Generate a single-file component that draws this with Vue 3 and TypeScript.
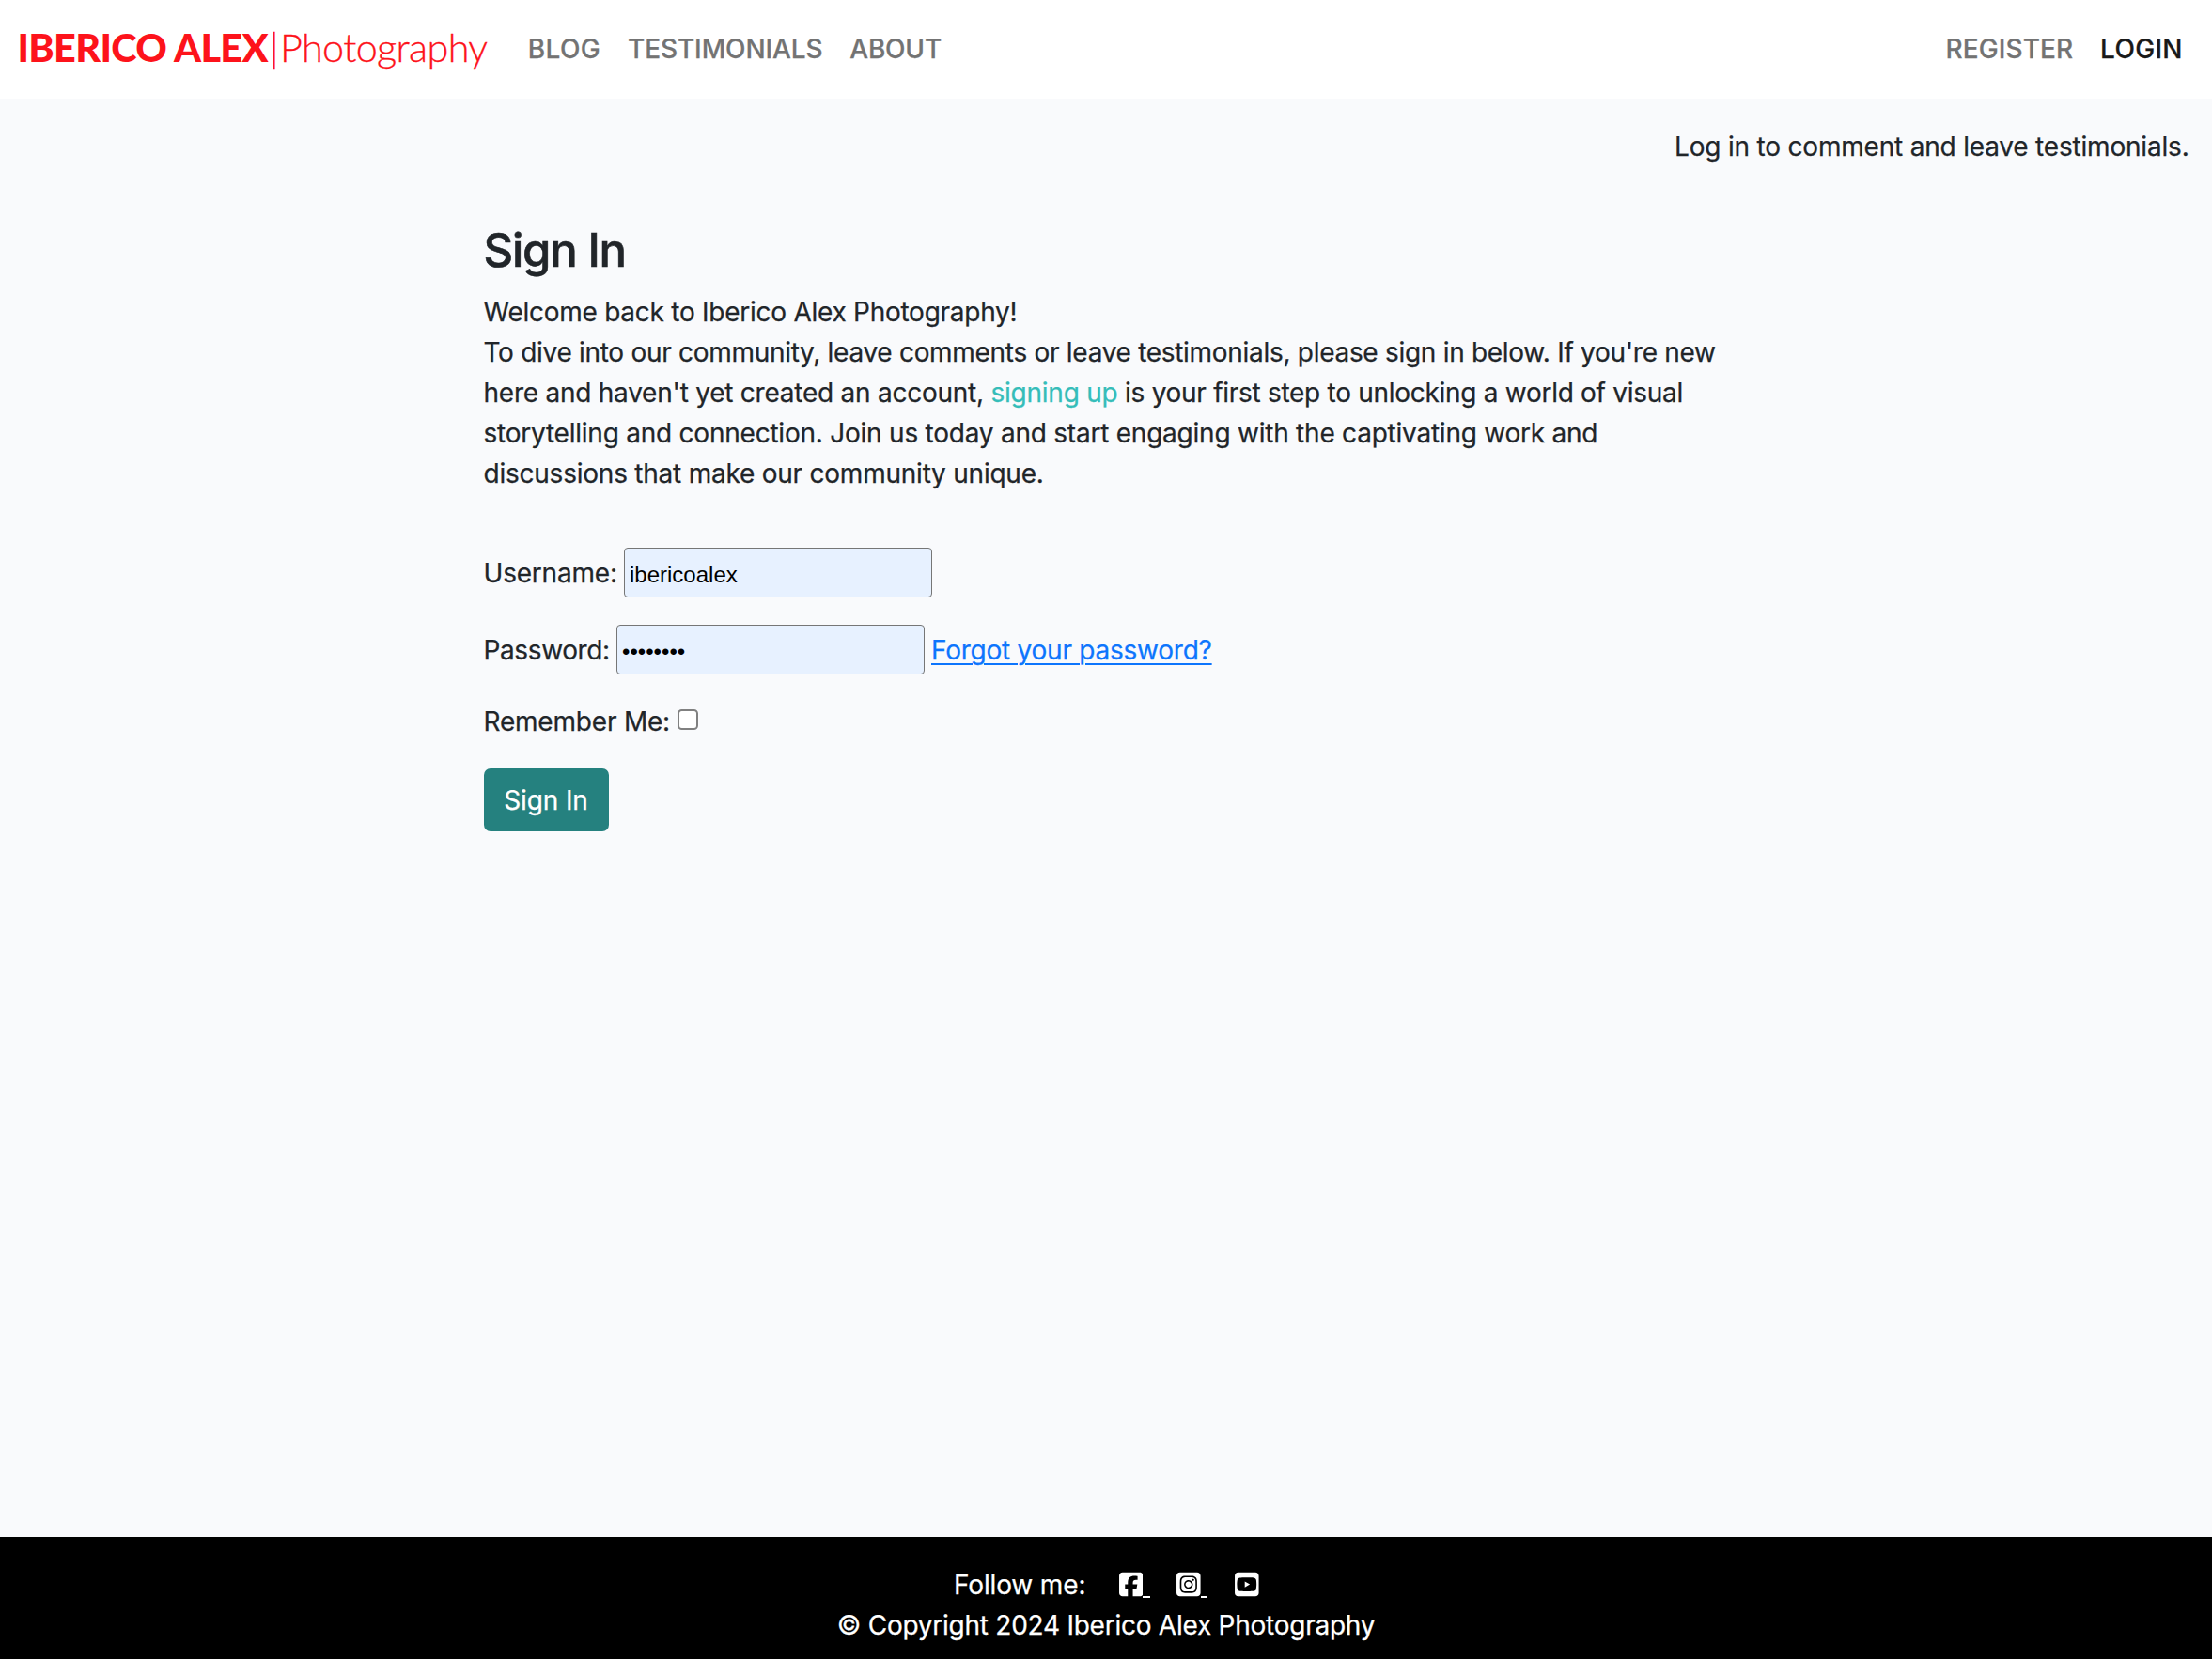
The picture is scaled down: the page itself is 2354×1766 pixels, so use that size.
<script setup lang="ts">
import { ref } from 'vue'

interface NavLink {
  label: string
  key: string
  active?: boolean
}

const mainLinks: NavLink[] = [
  { label: 'BLOG', key: 'blog' },
  { label: 'TESTIMONIALS', key: 'testimonials' },
  { label: 'ABOUT', key: 'about' },
]

const accountLinks: NavLink[] = [
  { label: 'REGISTER', key: 'register' },
  { label: 'LOGIN', key: 'login', active: true },
]

const username = ref('ibericoalex')
const password = ref('abcdefgh')
const remember = ref(false)
</script>

<template>
  <div class="page">
    <header class="navbar">
      <a class="brand"><b>IBERICO ALEX</b><span class="bar">|</span><span>Photography</span></a>
      <nav class="links">
        <a v-for="link in mainLinks" :key="link.key" class="link" :class="link.key">{{ link.label }}</a>
      </nav>
      <nav class="links account">
        <a
          v-for="link in accountLinks"
          :key="link.key"
          class="link"
          :class="[link.key, { active: link.active }]"
        >{{ link.label }}</a>
      </nav>
    </header>

    <p class="notice">Log in to comment and leave testimonials.</p>

    <main class="content">
      <h1 class="title">Sign In</h1>
      <p class="intro">
        <span class="row welcome">Welcome back to Iberico Alex Photography!</span>
        <span class="row dive">To dive into our community, leave comments or leave testimonials, please sign in below. If you're new</span>
        <span class="row here">here and haven't yet created an account, <a class="signup">signing up</a> <span class="step">is your first step to unlocking a world of visual</span></span>
        <span class="row story">storytelling and connection. Join us today and start engaging with the captivating work and</span>
        <span class="row story">discussions that make our community unique.</span>
      </p>

      <form class="form" @submit.prevent>
        <div class="field">
          <label class="label username" for="username">Username:</label>
          <input id="username" v-model="username" class="input" type="text" />
        </div>
        <div class="field">
          <label class="label password" for="password">Password:</label>
          <input id="password" v-model="password" class="input" type="password" />
          <a class="forgot">Forgot your password?</a>
        </div>
        <div class="remember">
          <label class="label" for="remember">Remember Me:</label>
          <input id="remember" v-model="remember" class="check" type="checkbox" />
        </div>
        <button class="submit" type="submit">Sign In</button>
      </form>
    </main>

    <footer class="footer">
      <div class="follow">
        <span class="follow-text">Follow me:</span>
        <a class="social underlined" aria-label="Facebook">
          <svg viewBox="0 0 448 512"><path fill="#fff" d="M64 32C28.700 32 0 60.700 0 96V416c0 35.300 28.700 64 64 64h98.200V334.200H109.400V256h52.800V222.300c0-87.100 39.400-127.500 125-127.500c16.200 0 44.200 3.200 55.700 6.400V172c-6-.6-16.500-1-29.600-1c-42 0-58.200 15.900-58.200 57.200V256h83.600l-14.400 78.200H255V480H384c35.300 0 64-28.700 64-64V96c0-35.300-28.700-64-64-64H64z" /></svg>
        </a>
        <a class="social underlined" aria-label="Instagram">
          <svg viewBox="0 0 448 512"><path fill="#fff" d="M194.400 211.700a53.300 53.300 0 1 0 59.300 88.700 53.300 53.300 0 1 0 -59.300-88.700zm142.300-68.400c-5.200-5.200-11.500-9.300-18.400-12c-18.100-7.100-57.600-6.800-83.100-6.500c-4.100 0-7.900 .1-11.200 .1c-3.300 0-7.200 0-11.400-.1c-25.500-.3-64.800-.7-82.900 6.500c-6.900 2.700-13.100 6.800-18.400 12s-9.300 11.500-12 18.400c-7.100 18.100-6.700 57.700-6.500 83.200c0 4.100 .1 7.900 .1 11.100s0 7-.1 11.100c-.2 25.500-.6 65.100 6.500 83.200c2.700 6.900 6.800 13.100 12 18.400s11.500 9.300 18.400 12c18.100 7.100 57.600 6.800 83.100 6.500c4.100 0 7.900-.1 11.200-.1c3.300 0 7.200 0 11.400 .1c25.500 .3 64.800 .7 82.900-6.500c6.900-2.700 13.100-6.800 18.400-12s9.300-11.500 12-18.400c7.200-18 6.800-57.400 6.500-83c0-4.200-.1-8.100-.1-11.400s0-7.100 .1-11.400c.3-25.500 .7-64.900-6.500-83c-2.700-6.900-6.800-13.100-12-18.400zm-67.100 44.500A82 82 0 1 1 178.400 324.200a82 82 0 1 1 91.100-136.400zm29.200-1.300c-3.100-2.100-5.600-5.100-7.100-8.600s-1.800-7.300-1.100-11.100s2.600-7.100 5.200-9.800s6.100-4.500 9.800-5.200s7.600-.4 11.100 1.100s6.500 3.900 8.600 7s3.200 6.800 3.200 10.600c0 2.500-.5 5-1.400 7.300s-2.400 4.400-4.100 6.200s-3.900 3.200-6.200 4.200s-4.800 1.500-7.300 1.500c-3.800 0-7.500-1.100-10.600-3.200zM448 96c0-35.300-28.700-64-64-64H64C28.700 32 0 60.700 0 96V416c0 35.300 28.700 64 64 64H384c35.300 0 64-28.700 64-64V96zM357 389c-18.700 18.700-41.400 24.600-67 25.900c-26.400 1.500-105.600 1.500-132 0c-25.600-1.300-48.300-7.200-67-25.900s-24.600-41.400-25.800-67c-1.500-26.400-1.500-105.600 0-132c1.300-25.600 7.100-48.300 25.800-67s41.500-24.600 67-25.800c26.400-1.500 105.600-1.500 132 0c25.600 1.300 48.300 7.100 67 25.800s24.600 41.400 25.800 67c1.500 26.300 1.500 105.400 0 131.900c-1.300 25.600-7.100 48.300-25.800 67z" /></svg>
        </a>
        <a class="social" aria-label="YouTube">
          <svg viewBox="0 0 448 512"><path fill="#fff" d="M282 256.200l-95.200-54.100V310.300L282 256.200zM384 32H64C28.700 32 0 60.700 0 96V416c0 35.300 28.700 64 64 64H384c35.300 0 64-28.700 64-64V96c0-35.300-28.700-64-64-64zm14.400 136.100c7.600 28.600 7.600 88.200 7.600 88.200s0 59.600-7.600 88.100c-4.200 15.800-16.500 27.700-32.200 31.900C337.900 384 224 384 224 384s-113.900 0-142.200-7.600c-15.700-4.200-28-16.100-32.200-31.900C42 315.900 42 256.300 42 256.300s0-59.700 7.600-88.200c4.200-15.800 16.500-28.200 32.200-32.400C110.100 128 224 128 224 128s113.900 0 142.200 7.700c15.700 4.200 28 16.600 32.200 32.400z" /></svg>
        </a>
      </div>
      <p class="copyright">© Copyright 2024 Iberico Alex Photography</p>
    </footer>
  </div>
</template>

<style>
body {
  margin: 0;
  background: #f9fafc;
}
</style>

<style scoped>
.page {
  box-sizing: border-box;
  display: flex;
  flex-direction: column;
  min-height: 1766px;
  background: #f9fafc;
  color: #212529;
  font: 400 28px/43px Inter, "Liberation Sans", sans-serif;
  -webkit-text-stroke: 0.25px currentColor;
}

p,
h1 {
  margin: 0;
}

.navbar {
  box-sizing: border-box;
  display: flex;
  align-items: flex-start;
  height: 105px;
  padding: 0 31.2px 0 18.4px;
  background: #fff;
}

.brand {
  flex: 0 0 543.4px;
  margin-top: 19px;
  color: #fd131b;
  font: 300 41.4px/62px Lato, sans-serif;
  letter-spacing: -0.65px;
  white-space: nowrap;
  -webkit-text-stroke: 0.3px #fd131b;
}

.brand b {
  font-weight: 900;
  -webkit-text-stroke: 0;
}

.bar {
  margin: 0 1.9px;
}

.links {
  display: flex;
  gap: 28.8px;
  margin-top: 31px;
  color: #737373;
  font-weight: 500;
}

.account {
  margin-left: auto;
}

.blog {
  letter-spacing: 0.4px;
}

.testimonials {
  letter-spacing: -0.11px;
}

.about {
  letter-spacing: -0.2px;
}

.register {
  letter-spacing: 0.1px;
}

.login {
  letter-spacing: 0.3px;
}

.active {
  color: #191919;
}

.notice {
  margin: 30px 24.5px 0 0;
  letter-spacing: -0.195px;
  text-align: right;
}

.content {
  flex: 1;
  width: 1325px;
  margin-left: 514.5px;
}

.title {
  margin-top: 59px;
  font-size: 49px;
  font-weight: 500;
  line-height: 60px;
  letter-spacing: -1.2px;
  -webkit-text-stroke-width: 0.6px;
}

.intro {
  margin-top: 14px;
  line-height: 43.1px;
}

.row {
  display: block;
  white-space: nowrap;
}

.welcome {
  letter-spacing: -0.26px;
}

.dive {
  letter-spacing: -0.295px;
}

.here {
  letter-spacing: -0.24px;
}

.signup {
  color: #35bdb9;
  -webkit-text-stroke-color: #35bdb9;
}

.step {
  letter-spacing: -0.285px;
}

.story {
  letter-spacing: -0.23px;
}

.form {
  display: flex;
  flex-direction: column;
  align-items: flex-start;
  margin-top: 57px;
}

.field {
  display: flex;
  align-items: center;
  height: 53px;
  margin-bottom: 29px;
}

.label {
  padding-top: 2px;
  letter-spacing: -0.2px;
}

.username {
  width: 149.5px;
}

.password {
  width: 141.5px;
  letter-spacing: -0.38px;
}

.input {
  box-sizing: border-box;
  width: 328px;
  height: 53px;
  margin: 0;
  padding: 5px 5px 1px;
  border: 1px solid #767676;
  border-radius: 4px;
  outline: none;
  background: #e7f1ff;
  color: #000;
  font: 24px "Liberation Sans", Arial, sans-serif;
  -webkit-text-stroke: 0;
}

.forgot {
  margin-left: 7px;
  padding-top: 2px;
  color: #0d75fd;
  letter-spacing: -0.24px;
  text-decoration: underline;
  text-decoration-thickness: 2px;
  text-underline-offset: 4px;
}

.remember {
  display: flex;
  align-items: flex-start;
  height: 43px;
  margin-top: -1px;
}

.remember .label {
  padding-top: 1px;
}

.check {
  appearance: none;
  box-sizing: border-box;
  width: 22px;
  height: 22px;
  margin: 9px 0 0 8.2px;
  border: 2px solid #808080;
  border-radius: 4.5px;
  background: #fff;
}

.submit {
  box-sizing: border-box;
  width: 133px;
  height: 67px;
  margin-top: 29px;
  padding: 2px 0 0;
  border: 0;
  border-radius: 7px;
  background: #25817f;
  color: #fff;
  font: inherit;
  letter-spacing: -0.143px;
}

.footer {
  box-sizing: border-box;
  height: 130px;
  padding-top: 30px;
  background: #000;
  color: #fff;
}

.follow {
  display: flex;
  justify-content: center;
}

.follow-text {
  margin-right: 35.5px;
  margin-left: 1px;
  letter-spacing: -0.14px;
}

.social {
  position: relative;
  width: 26px;
  height: 43px;
}

.social svg {
  display: block;
  width: 25.6px;
  height: 29.2px;
  margin-top: 5.6px;
}

.underlined {
  margin-right: 35.6px;
}

.underlined::after {
  content: "";
  position: absolute;
  top: 33px;
  left: 25.6px;
  width: 7.4px;
  height: 2px;
  background: #fff;
}

.copyright {
  letter-spacing: -0.25px;
  text-align: center;
}

.link,
.notice,
.title,
.label,
.forgot,
.submit,
.footer {
  -webkit-text-stroke-color: currentColor;
}
</style>
